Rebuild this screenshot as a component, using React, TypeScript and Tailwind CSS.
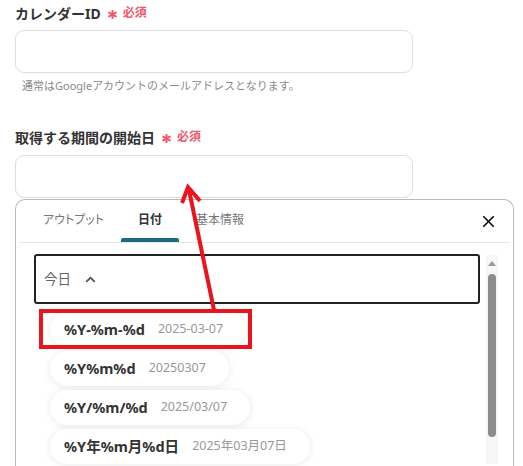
import React from "react";
import { ChevronUp, X } from "lucide-react";

const jp = "font-['Noto_Sans','Noto_Sans_CJK_JP',sans-serif]";

function RequiredMark() {
  return (
    <span className="ml-[7px] inline-flex items-center gap-[6px] text-[12px] font-bold text-[#f0566c]">
      <svg width="9" height="9" viewBox="0 0 10 10" className="mt-[2px]">
        <g stroke="#f0566c" strokeWidth="2.2" strokeLinecap="round">
          <line x1="5" y1="0.8" x2="5" y2="9.2" />
          <line x1="1.4" y1="2.9" x2="8.6" y2="7.1" />
          <line x1="1.4" y1="7.1" x2="8.6" y2="2.9" />
        </g>
      </svg>
      <span>必須</span>
    </span>
  );
}

const formats = [
  { code: "%Y-%m-%d", sample: "2025-03-07" },
  { code: "%Y%m%d", sample: "20250307" },
  { code: "%Y/%m/%d", sample: "2025/03/07" },
  { code: "%Y年%m月%d日", sample: "2025年03月07日" },
];

export default function App() {
  return (
    <div className={`relative h-[466px] w-[523px] overflow-hidden bg-white ${jp}`}>
      <div className="pl-[15px] pt-[3px]">
        {/* Calendar ID */}
        <div className="flex h-[20px] items-center text-[14px] font-bold text-[#333]">
          カレンダーID
          <RequiredMark />
        </div>
        <div className="mt-[7px] h-[43px] w-[398px] rounded-[9px] border border-[#dadde3] bg-white" />
        <div className="mt-[5px] h-[16px] pl-[7px] text-[11px] leading-[16px] text-[#8a8a8a]">
          通常はGoogleアカウントのメールアドレスとなります。
        </div>

        {/* Start date */}
        <div className="mt-[33px] flex h-[20px] items-center text-[14px] font-bold text-[#333]">
          取得する期間の開始日
          <RequiredMark />
        </div>
        <div className="mt-[8px] h-[43px] w-[398px] rounded-[9px] border border-[#dadde3] bg-white" />

        {/* Variable picker panel */}
        <div className="mt-[1px] h-[300px] w-[499px] rounded-t-[10px] border border-b-0 border-[#b9b9b9] bg-white">
          <div className="mx-[3px] flex h-[43px] items-end border-b border-[#e6e6e6] pl-[7px]">
            <div className="flex h-[42px] flex-1 items-stretch text-[12px] [font-feature-settings:'palt']">
              <div className="flex items-center px-[17px] pb-[2px] text-[#777]">アウトプット</div>
              <div className="relative flex items-center px-[17px] pb-[2px] font-bold text-[#333]">
                日付
                <span className="absolute bottom-0 left-0 right-0 h-[4px] rounded-t-[2px] bg-[#1b6b7c]" />
              </div>
              <div className="flex items-center px-[17px] pb-[2px] text-[#777]">基本情報</div>
            </div>
            <div className="flex h-[42px] items-center pr-[12px]">
              <X size={19} strokeWidth={2.2} className="text-[#111]" />
            </div>
          </div>

          <div className="flex pl-[18px] pr-[15px]">
            <div className="flex-1">
              <div className="mt-[11px] flex h-[50px] w-[446px] items-center gap-[12px] rounded-[3px] border-2 border-[#222] pl-[8px] text-[13.5px] text-[#666]">
                <span>今日</span>
                <ChevronUp size={15} strokeWidth={3} className="text-[#555]" />
              </div>
              <div className="mt-[8px] flex flex-col items-start gap-[4px] pl-[16px]">
                {formats.map((f) => (
                  <div
                    key={f.code}
                    className="flex h-[35px] items-center gap-[13px] rounded-full bg-white pl-[14px] pr-[23px] shadow-[0_1px_8px_rgba(0,0,0,0.09)]"
                  >
                    <span className="text-[14.5px] font-bold text-[#333]">{f.code}</span>
                    <span className="text-[12.5px] text-[#999]">{f.sample}</span>
                  </div>
                ))}
              </div>
            </div>
            {/* Scrollbar */}
            <div className="ml-[6px] mt-[12px] flex w-[12px] flex-col items-center bg-[#f7f7f7]">
              <svg width="8" height="6" viewBox="0 0 8 6" className="mt-[6px]">
                <polygon points="4,0 8,5 0,5" fill="#9a9a9a" />
              </svg>
              <div className="mt-[7px] h-[163px] w-[8px] rounded-full bg-[#8c8c8c]" />
            </div>
          </div>
        </div>
      </div>

      {/* Highlight box and arrow */}
      <div className="pointer-events-none absolute left-[39px] top-[309px] h-[40px] w-[213px] border-4 border-[#e8141e]" />
      <svg className="pointer-events-none absolute left-0 top-0" width="523" height="466">
        <line x1="214" y1="310" x2="189" y2="190" stroke="#e8141e" strokeWidth="4" />
        <polyline
          points="182,203 188,187 200,201"
          fill="none"
          stroke="#e8141e"
          strokeWidth="4"
          strokeLinejoin="miter"
          strokeLinecap="butt"
        />
      </svg>
    </div>
  );
}
